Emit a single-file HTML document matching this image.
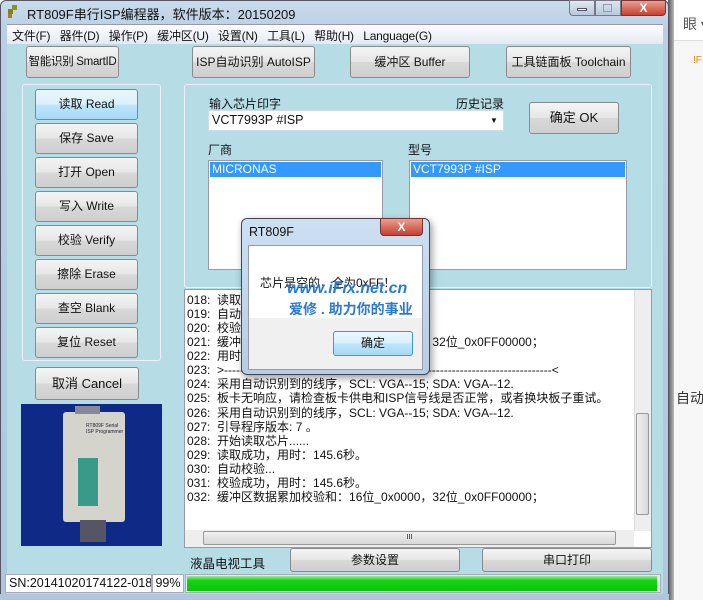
<!DOCTYPE html>
<html><head><meta charset="utf-8"><style>
*{margin:0;padding:0;box-sizing:border-box}
body{width:703px;height:600px;overflow:hidden;background:#f4f6f8;font-family:"Liberation Sans","Noto Sans CJK SC",sans-serif;font-size:12px;color:#111;position:relative;white-space:nowrap}
.a{position:absolute}
.btn{position:absolute;border:1px solid #8a8a8a;border-radius:3px;background:linear-gradient(#f4f4f4,#e6e6e6 50%,#d8d8d8 51%,#cfcfcf);text-align:center;font-size:12px;color:#111;white-space:nowrap;overflow:hidden}
.lb{position:absolute;width:103px;height:31px;line-height:29px;left:35px}
.log div{height:14.07px;line-height:14px;white-space:nowrap}
</style></head><body>
<!-- desktop on right -->
<div class="a" style="left:668px;top:0;width:35px;height:600px;background:#fff"></div>
<div class="a" style="left:668px;top:40px;width:35px;height:560px;background:#f7f7f7;border-top:1px solid #ddd"></div>
<div class="a" style="left:683px;top:14px;font-size:14px;color:#555">眼 ▾</div>
<div class="a" style="left:693px;top:55px;font-size:10px;color:#d80">!F</div>
<div class="a" style="left:676px;top:388px;font-size:14px;color:#333">自动</div>
<div class="a" style="left:668px;top:0;width:6px;height:600px;background:linear-gradient(90deg,#555,#bbb)"></div>
<!-- window frame -->
<div class="a" style="left:0;top:0;width:669px;height:600px;background:linear-gradient(#c9dcec,#b9cfe3 30px,#aec7dd);border:1px solid #556;border-radius:6px 6px 0 0"></div>
<div class="a" style="left:8px;top:9px;width:5px;height:5px;background:#8a7a20"></div>
<div class="a" style="left:12px;top:5px;width:5px;height:5px;background:#7a9a20"></div>
<div class="a" style="left:8px;top:14px;width:4px;height:4px;background:#a08030"></div>
<div class="a" style="left:27px;top:4px;font-size:13px">RT809F串行ISP编程器，软件版本：20150209</div>
<div class="a" style="left:569px;top:0;width:26px;height:16px;border:1px solid #778;border-radius:0 0 0 4px;background:linear-gradient(#e0e8f2,#b8c8da)"></div>
<div class="a" style="left:577px;top:8px;width:10px;height:3px;background:#fff;border:1px solid #556"></div>
<div class="a" style="left:595px;top:0;width:26px;height:16px;border:1px solid #778;background:linear-gradient(#dde6f0,#b8c8da)"></div>
<div class="a" style="left:603px;top:4px;width:9px;height:8px;border:1px solid #99a"></div>
<div class="a" style="left:621px;top:0;width:45px;height:16px;border:1px solid #733;border-radius:0 0 4px 0;background:linear-gradient(#e8a090,#c84030);color:#fff;font-weight:bold;text-align:center;line-height:14px;font-size:12px">X</div>
<!-- menu -->
<div class="a" style="left:7px;top:24px;width:656px;height:20px;background:linear-gradient(#fcfdfe,#e4e9f3);border-top:1px solid #99a"></div>
<div class="a" style="left:12px;top:27px;font-size:12px;letter-spacing:-0.2px">文件(F)&nbsp;&nbsp;&nbsp;器件(D)&nbsp;&nbsp;&nbsp;操作(P)&nbsp;&nbsp;&nbsp;缓冲区(U)&nbsp;&nbsp;&nbsp;设置(N)&nbsp;&nbsp;&nbsp;工具(L)&nbsp;&nbsp;&nbsp;帮助(H)&nbsp;&nbsp;&nbsp;Language(G)</div>
<!-- client -->
<div class="a" style="left:7px;top:44px;width:656px;height:550px;background:#b6dde6"></div>
<div class="btn" style="left:26px;top:46px;width:93px;height:32px;line-height:30px;font-size:11.5px;letter-spacing:-0.3px">智能识别 SmartID</div>
<div class="btn" style="left:192px;top:46px;width:123px;height:32px;line-height:30px">ISP自动识别 AutoISP</div>
<div class="btn" style="left:350px;top:46px;width:120px;height:32px;line-height:30px">缓冲区 Buffer</div>
<div class="btn" style="left:506px;top:46px;width:125px;height:32px;line-height:30px">工具链面板 Toolchain</div>
<!-- left group -->
<div class="a" style="left:22px;top:84px;width:139px;height:277px;border:1px solid #eef;border-radius:3px"></div>
<div class="btn lb" style="top:89px;border:1px solid #3c9ad8;background:linear-gradient(#eaf6fd,#d9f0fc 50%,#bee6fd 51%,#a7d9f5)">读取 Read</div>
<div class="btn lb" style="top:123px">保存 Save</div>
<div class="btn lb" style="top:157px">打开 Open</div>
<div class="btn lb" style="top:191px">写入 Write</div>
<div class="btn lb" style="top:225px">校验 Verify</div>
<div class="btn lb" style="top:259px">擦除 Erase</div>
<div class="btn lb" style="top:293px">查空 Blank</div>
<div class="btn lb" style="top:327px">复位 Reset</div>
<div class="btn" style="left:35px;top:367px;width:104px;height:33px;line-height:31px;font-size:13px">取消 Cancel</div>
<!-- image -->
<div class="a" style="left:21px;top:404px;width:141px;height:142px;background:#0e2a86"></div>
<div class="a" style="left:63px;top:412px;width:62px;height:110px;background:#d4d4cc;border-radius:3px"></div>
<div class="a" style="left:75px;top:406px;width:25px;height:8px;background:#889"></div>
<div class="a" style="left:78px;top:458px;width:20px;height:48px;background:#3a9a8a"></div>
<div class="a" style="left:80px;top:520px;width:26px;height:22px;background:#556"></div>
<div class="a" style="left:86px;top:423px;font-size:5px;color:#223">RT809F Serial<br>ISP Programmer</div>
<!-- right group -->
<div class="a" style="left:184px;top:84px;width:468px;height:204px;border:1px solid #eef;border-radius:3px"></div>
<div class="a" style="left:209px;top:95px">输入芯片印字</div>
<div class="a" style="left:456px;top:95px">历史记录</div>
<div class="a" style="left:208px;top:110px;width:296px;height:21px;background:#fff;border:1px solid #cde"></div>
<div class="a" style="left:212px;top:113px;font-size:12.5px">VCT7993P #ISP</div>
<div class="a" style="left:490px;top:116px;font-size:8px">▼</div>
<div class="btn" style="left:529px;top:102px;width:90px;height:32px;line-height:30px;font-size:13px">确定 OK</div>
<div class="a" style="left:208px;top:141px">厂商</div>
<div class="a" style="left:408px;top:141px">型号</div>
<div class="a" style="left:208px;top:160px;width:175px;height:110px;background:#fff;border:1px solid #99a"></div>
<div class="a" style="left:210px;top:162px;width:171px;height:15px;background:#3399ff;color:#fff;line-height:15px;padding-left:2px">MICRONAS</div>
<div class="a" style="left:409px;top:160px;width:218px;height:110px;background:#fff;border:1px solid #99a"></div>
<div class="a" style="left:411px;top:162px;width:214px;height:15px;background:#3399ff;color:#fff;line-height:15px;padding-left:2px">VCT7993P #ISP</div>
<!-- log -->
<div class="a" style="left:184px;top:289px;width:468px;height:259px;background:#fff;border:1px solid #99a"></div>
<div class="a log" style="left:187px;top:293px;font-size:12px">
<div>018:&nbsp; 读取成功，用时：145.6秒。</div>
<div>019:&nbsp; 自动校验...</div>
<div>020:&nbsp; 校验成功，用时：145.6秒。</div>
<div>021:&nbsp; 缓冲区数据累加校验和：16位_0x0000，32位_0x0FF00000；</div>
<div>022:&nbsp; 用时：</div>
<div>023:&nbsp; &gt;----------------------------------------------------------------------------------&lt;</div>
<div>024:&nbsp; 采用自动识别到的线序，SCL: VGA--15; SDA: VGA--12.</div>
<div>025:&nbsp; 板卡无响应，请检查板卡供电和ISP信号线是否正常，或者换块板子重试。</div>
<div>026:&nbsp; 采用自动识别到的线序，SCL: VGA--15; SDA: VGA--12.</div>
<div>027:&nbsp; 引导程序版本: 7 。</div>
<div>028:&nbsp; 开始读取芯片......</div>
<div>029:&nbsp; 读取成功，用时：145.6秒。</div>
<div>030:&nbsp; 自动校验...</div>
<div>031:&nbsp; 校验成功，用时：145.6秒。</div>
<div>032:&nbsp; 缓冲区数据累加校验和：16位_0x0000，32位_0x0FF00000；</div>
</div>
<div class="a" style="left:634px;top:290px;width:17px;height:241px;background:#eee;border-left:1px solid #ddd"></div>
<div class="a" style="left:636px;top:413px;width:13px;height:102px;background:linear-gradient(90deg,#f0f0f0,#d8d8d8);border:1px solid #999;border-radius:2px"></div>
<div class="a" style="left:185px;top:530px;width:449px;height:17px;background:#eee"></div>
<div class="a" style="left:203px;top:531px;width:413px;height:14px;background:linear-gradient(#f0f0f0,#d8d8d8);border:1px solid #999;border-radius:2px;font-size:7px;text-align:center;line-height:12px">III</div>
<!-- bottom row -->
<div class="a" style="left:190px;top:553px;font-size:12.5px">液晶电视工具</div>
<div class="btn" style="left:290px;top:548px;width:170px;height:24px;line-height:22px">参数设置</div>
<div class="btn" style="left:482px;top:548px;width:170px;height:24px;line-height:22px">串口打印</div>
<!-- status -->
<div class="a" style="left:5px;top:574px;width:147px;height:19px;background:#fff;border:1px solid #aab;line-height:17px;padding-left:3px;overflow:hidden;white-space:nowrap;font-size:12.5px">SN:20141020174122-0188</div>
<div class="a" style="left:152px;top:574px;width:32px;height:19px;background:#fff;border:1px solid #aab;line-height:17px;text-align:center;font-size:12.5px">99%</div>
<div class="a" style="left:185px;top:574px;width:476px;height:19px;background:#e8e8e8;border:1px solid #aab"></div>
<div class="a" style="left:187px;top:576px;width:470px;height:15px;background:linear-gradient(#9fe89f,#14d414 30%,#0cc40c)"></div>
<div class="a" style="left:0;top:594px;width:669px;height:6px;background:#aec7dd"></div>
<!-- dialog -->
<div class="a" style="left:241px;top:218px;width:189px;height:157px;background:linear-gradient(#cde0f2,#b6cde4);border:1px solid #445;border-radius:6px;box-shadow:2px 3px 8px rgba(0,0,0,.4)"></div>
<div class="a" style="left:249px;top:225px;font-size:12.5px">RT809F</div>
<div class="a" style="left:380px;top:218px;width:43px;height:18px;background:linear-gradient(#e8a090,#c84030);border:1px solid #733;border-radius:0 0 4px 4px;color:#fff;font-weight:bold;text-align:center;line-height:16px">X</div>
<div class="a" style="left:248px;top:245px;width:175px;height:125px;background:#f0f0f0;border:1px solid #99a"></div>
<div class="a" style="left:249px;top:246px;width:173px;height:72px;background:#fff"></div>
<div class="a" style="left:260px;top:274px;font-size:12px">芯片是空的，全为0xFF！</div>
<div class="a" style="left:287px;top:280px;font-size:16px;font-style:italic;font-weight:bold;color:#2a7ad0">www.iFix.net.cn</div>
<div class="a" style="left:289px;top:299px;font-size:14px;font-weight:bold;color:#2a7ad0">爱修 . 助力你的事业</div>
<div class="btn" style="left:333px;top:331px;width:80px;height:25px;line-height:23px;border:1px solid #3c9ad8;background:linear-gradient(#eaf6fd,#d9f0fc 50%,#bee6fd 51%,#a7d9f5)">确定</div>
</body></html>
